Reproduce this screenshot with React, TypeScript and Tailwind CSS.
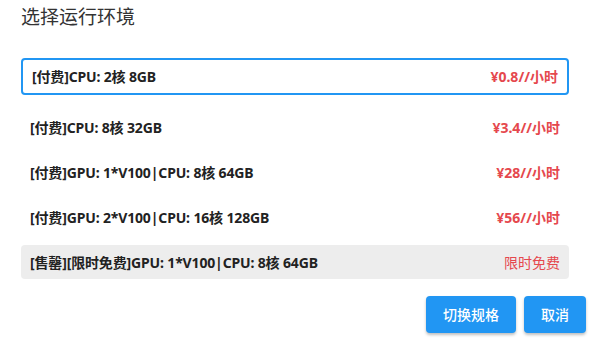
import React, { useState } from 'react';

interface Spec {
  id: number;
  label: string;
  price: string;
  soldOut?: boolean;
}

const specs: Spec[] = [
  { id: 1, label: '[付费]CPU: 2核 8GB', price: '¥0.8//小时' },
  { id: 2, label: '[付费]CPU: 8核 32GB', price: '¥3.4//小时' },
  { id: 3, label: '[付费]GPU: 1*V100|CPU: 8核 64GB', price: '¥28//小时' },
  { id: 4, label: '[付费]GPU: 2*V100|CPU: 16核 128GB', price: '¥56//小时' },
  { id: 5, label: '[售罄][限时免费]GPU: 1*V100|CPU: 8核 64GB', price: '限时免费', soldOut: true },
];

export default function App() {
  const [selected, setSelected] = useState(1);

  return (
    <div
      className="w-[589px] h-[341px] bg-white overflow-hidden"
      style={{ fontFamily: '"Noto Sans", "Noto Sans CJK SC", sans-serif' }}
    >
      <div className="pl-[21px] pr-[20px] pt-[3px]">
        <h2 className="text-[19px] leading-[28px] text-[#333] font-normal">选择运行环境</h2>

        {/* spec list */}
        <div className="mt-[27px] flex flex-col gap-[11px]">
          {specs.map((spec) => {
            const isSelected = spec.id === selected;
            return (
              <div
                key={spec.id}
                onClick={() => !spec.soldOut && setSelected(spec.id)}
                className={`flex items-center justify-between rounded-[4px] text-[14px] ${
                  isSelected
                    ? 'h-[37px] border-2 border-[#2196f3] px-[9px] mb-[4px]'
                    : spec.soldOut
                    ? 'h-[34px] bg-[#ededed] px-[9px]'
                    : 'h-[34px] px-[9px]'
                }`}
              >
                <span className="font-bold text-[#222] tracking-[-0.15px]">{spec.label}</span>
                <span className={`text-[#e5484d] ${spec.soldOut ? 'font-normal' : 'font-bold'}`}>
                  {spec.price}
                </span>
              </div>
            );
          })}
        </div>
      </div>

      {/* actions */}
      <div className="flex justify-end gap-[8px] pr-[3px] mt-[17px]">
        <button className="h-[37px] px-[17px] rounded-[4px] bg-[#2196f3] text-white text-[14px] font-medium shadow-[0_2px_3px_rgba(0,0,0,0.25)]">
          切换规格
        </button>
        <button className="h-[37px] px-[17px] rounded-[4px] bg-[#2196f3] text-white text-[14px] font-medium shadow-[0_2px_3px_rgba(0,0,0,0.25)]">
          取消
        </button>
      </div>
    </div>
  );
}
